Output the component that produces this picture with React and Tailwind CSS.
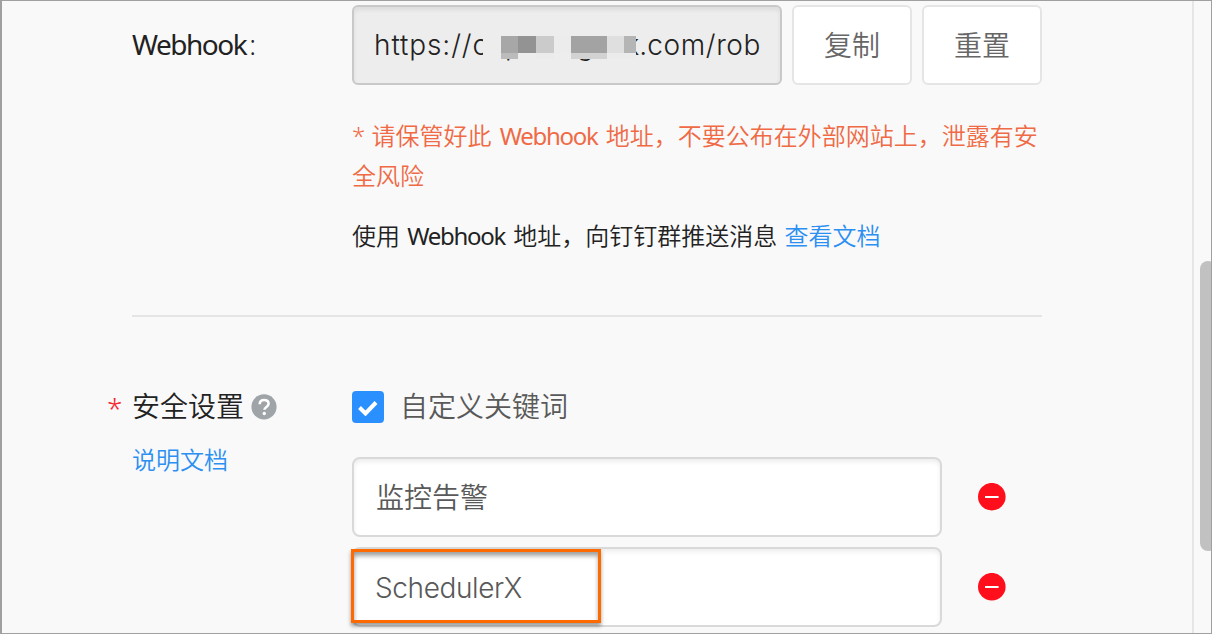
import clsx from 'clsx';

const KEYWORDS = ['监控告警', 'SchedulerX'];

const MOSAIC_TOP = ['bg-[#a7a7a7] w-[17px]', 'bg-[#939393] w-[18px]', 'bg-[#cbcbcb] w-[18px]', 'bg-[#ececec] w-[17px]', 'bg-[#a3a3a3] w-[36px]', 'bg-[#dfdfdf] w-[17px]', 'bg-[#b5b5b5] w-[12px]'];
const MOSAIC_BOTTOM = ['bg-[#bbbbbb] w-[17px]', 'bg-[#ededed] w-[18px]', 'bg-[#ebebeb] w-[18px]', 'bg-[#ededed] w-[17px]', 'bg-[#d2d2d2] w-[36px]', 'bg-[#ebebeb] w-[17px]', 'bg-[#ebebeb] w-[12px]'];

function Button({ children }) {
  return (
    <button className="flex h-20 w-[120px] items-center justify-center rounded-md border-2 border-[#e5e5e5] bg-white text-[28px] font-[350] text-[#666]">
      {children}
    </button>
  );
}

function Mosaic() {
  return (
    <div className="absolute left-[129px] top-[19px] bg-[#ededed] pl-[18px] pt-[10px]">
      <div className="flex h-[17px]">
        {MOSAIC_TOP.map((c, i) => <span key={i} className={c} />)}
      </div>
      <div className="flex h-[6px]">
        {MOSAIC_BOTTOM.map((c, i) => <span key={i} className={c} />)}
      </div>
    </div>
  );
}

function HelpIcon() {
  return (
    <svg viewBox="0 0 26 26" className="ml-[7px] size-[26px]">
      <circle cx="13" cy="12.8" r="12.6" fill="#9fa4a8" />
      <path d="M8.7 10.3C8.7 7.6 10.5 6 13.1 6c2.6 0 4.5 1.5 4.5 3.8 0 3.1-4.2 3.1-4.2 6" fill="none" stroke="#fff" strokeWidth="2.5" />
      <circle cx="13.3" cy="19.5" r="1.7" fill="#fff" />
    </svg>
  );
}

function RemoveIcon() {
  return (
    <svg viewBox="0 0 28 28" className="size-7">
      <circle cx="13.8" cy="13.7" r="13.8" fill="#ff0f1c" />
      <path d="M7 14h13.6" stroke="#fff" strokeWidth="2" />
    </svg>
  );
}

function KeywordRow({ value, highlighted }) {
  return (
    <div className="relative flex items-center">
      <div className="flex h-20 w-[590px] items-center rounded-lg border-2 border-[#d9d9d9] bg-white px-[22px] text-[28px] text-[#595959] shadow-[inset_0_3px_4px_rgba(0,0,0,0.07)]">
        <span className={clsx(highlighted && "-ml-px pt-0.5 font-['Inter','Noto_Sans_CJK_SC',sans-serif] font-[330] tracking-[-0.4px]")}>{value}</span>
      </div>
      <button className="ml-9">
        <RemoveIcon />
      </button>
      {highlighted && (
        <div className="absolute left-[-1px] top-[2px] h-[74px] w-[250px] border-3 border-[#ff6a00] shadow-[0_3px_4px_rgba(0,0,0,0.4),inset_0_4px_4px_rgba(0,0,0,0.35)]" />
      )}
    </div>
  );
}

export default function App() {
  return (
    <div className="flex h-[634px] w-[1212px] overflow-hidden border border-l-2 border-[#a0a0a0] bg-[#f9f9f9] font-['Noto_Sans','Noto_Sans_CJK_SC',sans-serif] font-[350] text-[#222]">
      <main className="w-[1192px] shrink-0 border-r-2 border-[#e6e6e6] pl-[130px] pt-1">
        <section className="flex w-[910px]">
          <div className="flex h-20 w-[220px] items-center pb-0.5 text-[28px] font-normal tracking-[-1.5px]">Webhook<span className="ml-[3px] font-light">:</span></div>
          <div className="flex w-[690px] flex-col">
            <div className="flex gap-2.5">
              <div className="relative flex h-20 w-[430px] items-center rounded-md border-2 border-[#c9c9c9] bg-[#ededed] px-5 text-[28px] shadow-[inset_0_3px_4px_rgba(0,0,0,0.07)]">
                <span className="whitespace-nowrap font-['Inter','Noto_Sans_CJK_SC',sans-serif] font-[340]">
                  <span className="tracking-[0.9px]">https://</span><span className="tracking-[0.1px]">oapi.dingtalk.</span><span className="tracking-[0.6px]">com/rob</span>
                </span>
                <Mosaic />
              </div>
              <Button>复制</Button>
              <Button>重置</Button>
            </div>
            <div className="mt-[31px] text-2xl leading-10 text-[#ef6a45]">
              <p className="flex whitespace-pre">
                <span>* 请保管好此 </span>
                <span className="ml-0.5 mr-0.5 font-normal tracking-[-1.3px]">Webhook</span>
                <span> 地址，不要公布在外部网站上，泄露有安</span>
              </p>
              <p>全风险</p>
            </div>
            <p className="mt-5 flex whitespace-pre text-2xl leading-10">
              <span>使用 </span>
              <span className="ml-px mr-0.5 font-normal tracking-[-1.3px]">Webhook</span>
              <span> 地址，向钉钉群推送消息 </span>
              <a className="ml-px text-[#2c8ff2]">查看文档</a>
            </p>
          </div>
        </section>

        <hr className="mt-[59px] w-[910px] border-t-2 border-[#e5e5e5]" />

        <section className="mt-[70px] flex w-[910px]">
          <div className="w-[220px]">
            <div className="-ml-6 flex h-10 items-center text-[28px]">
              <span className="-ml-px w-[25px] pt-0.5 text-[#f5222d]">*</span>
              <span className="pb-0.5">安全设置</span>
              <HelpIcon />
            </div>
            <a className="mt-[13px] block text-2xl leading-10 text-[#2c8ff2]">说明文档</a>
          </div>
          <div>
            <label className="flex h-10 items-center gap-4 text-[28px] text-[#595959]">
              <span className="flex size-8 items-center justify-center rounded-[4px] bg-[#2b90ff]">
                <svg viewBox="0 0 20 16" className="mt-0.5 h-4 w-5">
                  <path d="M1.5 7.5l6 6L18 2.5" fill="none" stroke="#fff" strokeWidth="4" />
                </svg>
              </span>
              <span className="pb-0.5">自定义关键词</span>
            </label>
            <div className="mt-[30px] flex flex-col gap-2.5">
              {KEYWORDS.map((k, i) => <KeywordRow key={k} value={k} highlighted={i === 1} />)}
            </div>
          </div>
        </section>
      </main>
      <aside className="shrink-0 pl-1.5 pt-[260px]">
        <div className="h-[290px] w-4 rounded-lg bg-[#c1c1c1]" />
      </aside>
    </div>
  );
}
